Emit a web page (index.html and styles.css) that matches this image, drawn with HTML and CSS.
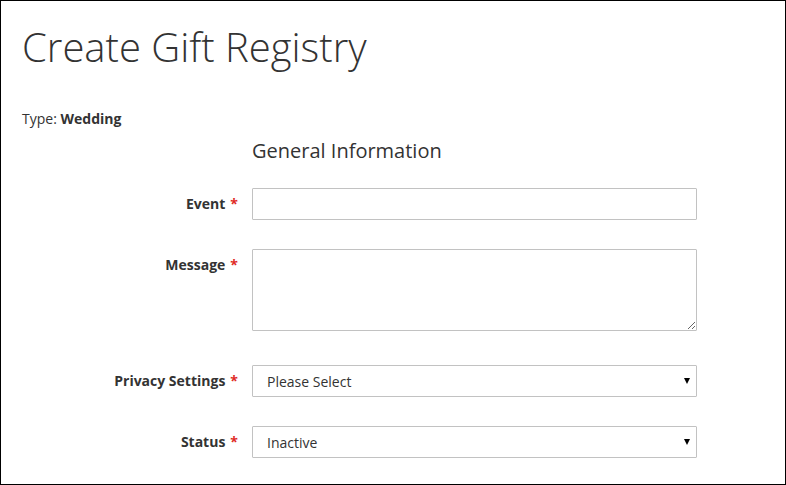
FILE: index.html
```html
<!DOCTYPE html>
<html lang="en">
<head>
<meta charset="utf-8">
<title>Create Gift Registry</title>
<link rel="stylesheet" href="styles.css">
</head>
<body>
<div class="frame">
  <h1 class="page-title">Create Gift Registry</h1>
  <p class="type-line">Type: <strong>Wedding</strong></p>
  <form class="form">
    <div class="legend">General Information</div>
    <div class="field">
      <label class="label required" for="event">Event</label>
      <div class="control"><input class="input" id="event" type="text"></div>
    </div>
    <div class="field field-message">
      <label class="label required" for="message">Message</label>
      <div class="control"><textarea class="textarea" id="message"></textarea></div>
    </div>
    <div class="field">
      <label class="label required" for="privacy">Privacy Settings</label>
      <div class="control select-wrap">
        <select class="select" id="privacy"><option>Please Select</option></select>
      </div>
    </div>
    <div class="field">
      <label class="label required" for="status">Status</label>
      <div class="control select-wrap">
        <select class="select" id="status"><option>Inactive</option></select>
      </div>
    </div>
  </form>
</div>
</body>
</html>
```
FILE: styles.css
```css
html, body {
  margin: 0;
  padding: 0;
  background: #fff;
}
body {
  font-family: "Open Sans", "Liberation Sans", sans-serif;
  color: #333;
  font-size: 14px;
  line-height: 20px;
}
.frame {
  box-sizing: border-box;
  width: 786px;
  height: 485px;
  border: 1px solid #000;
  padding: 24px 0 0 21px;
  overflow: hidden;
}
.page-title {
  margin: 0;
  font-size: 40px;
  line-height: 44px;
  font-weight: 300;
  color: #333;
}
.type-line {
  margin: 40px 0 0 0;
  font-size: 14px;
  line-height: 20px;
}
.type-line strong {
  font-weight: 700;
}
.form {
  margin: 10px 0 0 0;
}
.legend {
  margin-left: 230px;
  font-size: 20px;
  line-height: 24px;
  font-weight: 400;
  margin-bottom: 25px;
}
.field {
  display: flex;
  align-items: flex-start;
  margin-bottom: 29px;
}
.field-message {
  margin-bottom: 34px;
}
.label {
  box-sizing: border-box;
  width: 230px;
  padding: 6px 14px 0 0;
  text-align: right;
  font-weight: 700;
  font-size: 14px;
  line-height: 20px;
}
.required::after {
  content: "*";
  color: #e02b27;
  margin-left: 5px;
  font-size: 14px;
}
.control {
  width: 445px;
  position: relative;
}
.input,
.select,
.textarea {
  box-sizing: border-box;
  display: block;
  width: 445px;
  border: 1px solid #c2c2c2;
  border-radius: 1px;
  background: #fff;
  font-family: "Open Sans", "Liberation Sans", sans-serif;
  font-size: 14px;
  color: #333;
  margin: 0;
}
.input {
  height: 32px;
  padding: 0 9px;
}
.textarea {
  height: 82px;
  padding: 10px;
}
.select {
  height: 32px;
  padding: 0 25px 0 14px;
  appearance: none;
  -webkit-appearance: none;
  outline: none;
}
.select-wrap::after {
  content: "";
  position: absolute;
  right: 7px;
  top: 13px;
  width: 0;
  height: 0;
  border-left: 3.5px solid transparent;
  border-right: 3.5px solid transparent;
  border-top: 6px solid #000;
  pointer-events: none;
}
```
